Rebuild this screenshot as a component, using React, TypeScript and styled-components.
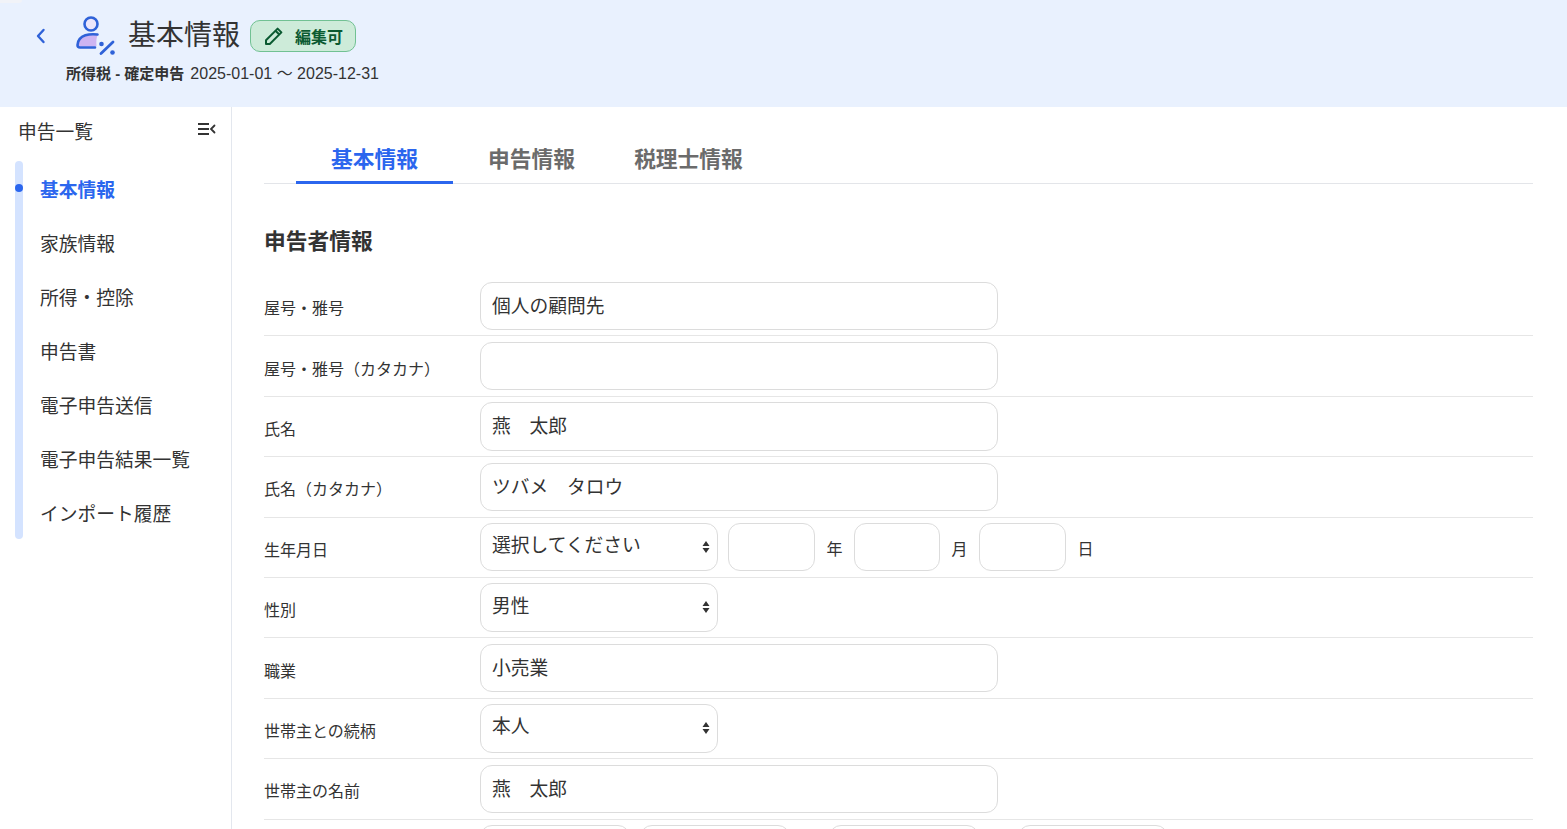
import React from 'react';
import styled, { createGlobalStyle } from 'styled-components';

const Global = createGlobalStyle`
  html, body { margin: 0; padding: 0; background: #fff; }
  body { font-family: "Liberation Sans", "Noto Sans CJK JP", sans-serif; color: #333; overflow: hidden; }
  * { box-sizing: border-box; }
`;

const Page = styled.div`
  height: 829px;
  overflow: hidden;
  display: flex;
  flex-direction: column;
`;

const Header = styled.header`
  height: 107px;
  flex: none;
  background: #e9f1fe;
  padding: 15px 0 0 32px;
  position: relative;
`;

const Corner = styled.span`
  position: absolute;
  left: 0;
  top: 0;
  width: 22px;
  height: 3px;
  border-radius: 0 0 4px 0;
  background: #f1f3f8;
`;

const TitleRow = styled.div`
  display: flex;
  align-items: center;
  height: 42px;
`;

const BackButton = styled.button`
  width: 18px;
  height: 22px;
  margin-right: 23px;
  padding: 0;
  border: 0;
  background: none;
  color: #2f62d8;
  display: flex;
  align-items: center;
  justify-content: center;
`;

const Title = styled.h1`
  margin: 0 10px 0 11px;
  font-size: 28px;
  line-height: 36px;
  font-weight: 400;
  color: #333;
`;

const Badge = styled.span`
  width: 106px;
  height: 32px;
  display: flex;
  align-items: center;
  gap: 11px;
  padding-left: 13px;
  border: 1px solid #71c193;
  border-radius: 10px;
  background: #cdebd9;
  color: #0b5a31;
  font-size: 16px;
  font-weight: 700;
`;

const Subtitle = styled.div`
  margin: 6px 0 0 34px;
  font-size: 16px;
  line-height: 22px;
  display: flex;
  gap: 6px;
  color: #333;
`;

const SubStrong = styled.strong`
  font-size: 15px;
  font-weight: 700;
`;

const Body = styled.div`
  flex: 1;
  min-height: 0;
  display: flex;
`;

const Sidebar = styled.aside`
  width: 232px;
  flex: none;
  border-right: 1px solid #e3e7ee;
  padding: 14px 15px 0 15px;
`;

const SideHead = styled.div`
  display: flex;
  align-items: flex-start;
  justify-content: space-between;
  height: 40px;
  padding-left: 3px;
  font-size: 18.75px;
  line-height: 24px;
`;

const Collapse = styled.button`
  width: 19px;
  height: 16px;
  margin-top: 1px;
  padding: 0;
  border: 0;
  background: none;
  color: #333;
`;

const NavList = styled.ul`
  list-style: none;
  margin: 0;
  padding: 0 0 0 17px;
  position: relative;
  &::before {
    content: '';
    position: absolute;
    left: 0;
    top: 0;
    bottom: 0;
    width: 8px;
    border-radius: 4px;
    background: #d4e3ff;
  }
`;

const NavItem = styled.li<{ $active?: boolean }>`
  position: relative;
  height: 54px;
  display: flex;
  align-items: center;
  padding-left: 8px;
  font-size: 18.75px;
  font-weight: ${(p) => (p.$active ? 700 : 400)};
  color: ${(p) => (p.$active ? '#2b66ee' : '#333')};
  ${(p) =>
    p.$active
      ? `&::before {
    content: '';
    position: absolute;
    left: -17px;
    top: 23px;
    width: 8px;
    height: 8px;
    border-radius: 50%;
    background: #2b66ee;
  }`
      : ''}
`;

const Main = styled.main`
  flex: 1;
  min-width: 0;
  padding: 30px 34px 0 32px;
`;

const Tabs = styled.nav`
  display: flex;
  height: 47px;
  padding-left: 32px;
  border-bottom: 1px solid #e3e5e9;
`;

const Tab = styled.div<{ $active?: boolean }>`
  width: 157px;
  height: 47px;
  padding-top: 6px;
  text-align: center;
  font-size: 21.75px;
  line-height: 33px;
  font-weight: 700;
  color: ${(p) => (p.$active ? '#2b66ee' : '#6b6b6b')};
  border-bottom: 3px solid ${(p) => (p.$active ? '#2b66ee' : 'transparent')};
`;

const SectionTitle = styled.h2`
  margin: 42px 0 18px;
  font-size: 21.75px;
  line-height: 32px;
  font-weight: 700;
  color: #333;
`;

const Row = styled.div`
  display: flex;
  align-items: center;
  height: 60.4px;
  border-bottom: 1px solid #e6e6e6;
`;

const Label = styled.label`
  width: 216px;
  flex: none;
  padding-top: 3px;
  font-size: 16px;
  color: #333;
`;

const TextField = styled.input<{ $w?: number }>`
  width: ${(p) => p.$w ?? 518}px;
  height: 48.4px;
  flex: none;
  padding: 0 11px 3px;
  border: 1px solid #dcdcdc;
  border-radius: 12px;
  background: #fff;
  outline: none;
  color: #333;
  font: 400 18.75px "Liberation Sans", "Noto Sans CJK JP", sans-serif;
`;

const SelectWrap = styled.div<{ $w?: number }>`
  position: relative;
  width: ${(p) => p.$w ?? 238}px;
  flex: none;
`;

const Select = styled.select`
  appearance: none;
  width: 100%;
  height: 48.4px;
  padding: 0 24px 3px 11px;
  border: 1px solid #dcdcdc;
  border-radius: 12px;
  background: #fff;
  outline: none;
  color: #333;
  font: 400 18.75px "Liberation Sans", "Noto Sans CJK JP", sans-serif;
`;

const Arrows = styled.svg`
  position: absolute;
  right: 8px;
  top: 17px;
  width: 8px;
  height: 14px;
  pointer-events: none;
`;

const Unit = styled.span`
  width: 39px;
  flex: none;
  text-align: center;
  padding-top: 1px;
  font-size: 16px;
  color: #333;
`;

const DateGap = styled.span`
  width: 10px;
  flex: none;
`;

const LastRow = styled.div`
  display: flex;
  padding-top: 5.5px;
  padding-left: 216px;
`;

const PersonPercent = () => (
  <svg width="44" height="44" viewBox="0 0 44 44" fill="none" style={{ flex: 'none' }}>
    <circle cx="18" cy="10" r="6.5" fill="#ece6fb" stroke="#2f62d8" strokeWidth="2.6" />
    <path d="M4 32c0-7 5-11.5 13-12l8 0c-1.5 3-2 7-1.500 12.500H6c-1.200 0-2-.2-2-.5z" fill="#cdb4f2" />
    <path d="M24.500 20.500c-6.500-.8-19.200-.5-20 10.500 0 1.500 1 2.500 2.500 2.500h15" stroke="#2f62d8" strokeWidth="2.600" strokeLinecap="round" />
    <path d="M28 39.500 40 28" stroke="#2f62d8" strokeWidth="2.800" strokeLinecap="round" />
    <circle cx="28.500" cy="30" r="2.300" fill="#2f62d8" />
    <circle cx="39.500" cy="38.500" r="2.300" fill="#2f62d8" />
  </svg>
);

const Pencil = () => (
  <svg width="20" height="20" viewBox="0 0 20 20" fill="none" style={{ flex: 'none' }}>
    <path d="M2 18v-3.800L13.600 2.600l3.800 3.800L5.800 18z" stroke="#0b5a31" strokeWidth="2" strokeLinejoin="round" />
    <path d="M11.500 4.700l3.800 3.800" stroke="#0b5a31" strokeWidth="2" />
  </svg>
);

const SelectField = ({ value, w }: { value: string; w?: number }) => (
  <SelectWrap $w={w}>
    <Select defaultValue={value}>
      <option>{value}</option>
    </Select>
    <Arrows viewBox="0 0 8 14">
      <path d="M4 1 7.500 6h-7zM4 13 .5 8h7z" fill="#333" />
    </Arrows>
  </SelectWrap>
);

const navItems = ['家族情報', '所得・控除', '申告書', '電子申告送信', '電子申告結果一覧', 'インポート履歴'];

export default function App() {
  return (
    <Page>
      <Global />
      <Header>
        <Corner />
        <TitleRow>
          <BackButton aria-label="戻る">
            <svg width="10" height="16" viewBox="0 0 10 16" fill="none">
              <path d="M7.500 2 2 8l5.500 6" stroke="currentColor" strokeWidth="2.400" strokeLinecap="round" strokeLinejoin="round" />
            </svg>
          </BackButton>
          <PersonPercent />
          <Title>基本情報</Title>
          <Badge>
            <Pencil />
            編集可
          </Badge>
        </TitleRow>
        <Subtitle>
          <SubStrong>所得税 - 確定申告</SubStrong>
          <span>2025-01-01 〜 2025-12-31</span>
        </Subtitle>
      </Header>
      <Body>
        <Sidebar>
          <SideHead>
            申告一覧
            <Collapse aria-label="閉じる">
              <svg width="19" height="14" viewBox="0 0 19 14" fill="none">
                <path d="M1 2h11M1 7h11M1 12h11" stroke="currentColor" strokeWidth="1.800" />
                <path d="M17.500 3.500 14 7l3.500 3.500" stroke="currentColor" strokeWidth="1.800" strokeLinecap="round" />
              </svg>
            </Collapse>
          </SideHead>
          <NavList>
            <NavItem $active>基本情報</NavItem>
            {navItems.map((n) => (
              <NavItem key={n}>{n}</NavItem>
            ))}
          </NavList>
        </Sidebar>
        <Main>
          <Tabs>
            <Tab $active>基本情報</Tab>
            <Tab>申告情報</Tab>
            <Tab>税理士情報</Tab>
          </Tabs>
          <SectionTitle>申告者情報</SectionTitle>
          <Row>
            <Label>屋号・雅号</Label>
            <TextField readOnly value="個人の顧問先" />
          </Row>
          <Row>
            <Label>屋号・雅号（カタカナ）</Label>
            <TextField readOnly value="" />
          </Row>
          <Row>
            <Label>氏名</Label>
            <TextField readOnly value="燕　太郎" />
          </Row>
          <Row>
            <Label>氏名（カタカナ）</Label>
            <TextField readOnly value="ツバメ　タロウ" />
          </Row>
          <Row>
            <Label>生年月日</Label>
            <SelectField value="選択してください" />
            <DateGap />
            <TextField readOnly value="" $w={87} />
            <Unit>年</Unit>
            <TextField readOnly value="" $w={86} />
            <Unit>月</Unit>
            <TextField readOnly value="" $w={87} />
            <Unit>日</Unit>
          </Row>
          <Row>
            <Label>性別</Label>
            <SelectField value="男性" />
          </Row>
          <Row>
            <Label>職業</Label>
            <TextField readOnly value="小売業" />
          </Row>
          <Row>
            <Label>世帯主との続柄</Label>
            <SelectField value="本人" />
          </Row>
          <Row>
            <Label>世帯主の名前</Label>
            <TextField readOnly value="燕　太郎" />
          </Row>
          <LastRow>
            <TextField readOnly value="" $w={150} />
            <DateGap />
            <TextField readOnly value="" $w={150} />
            <Unit>&nbsp;</Unit>
            <TextField readOnly value="" $w={150} />
            <Unit>&nbsp;</Unit>
            <TextField readOnly value="" $w={150} />
          </LastRow>
        </Main>
      </Body>
    </Page>
  );
}
